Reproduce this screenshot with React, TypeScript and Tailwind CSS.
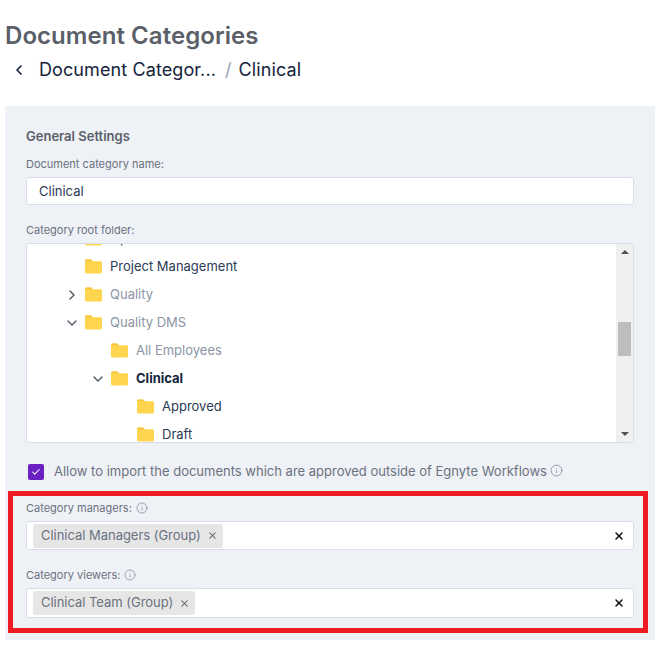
import React from 'react';
import { ChevronLeft, ChevronRight, ChevronDown, Check, X, Info } from 'lucide-react';

type Folder = {
  name: string;
  depth: number;
  open?: boolean;
  closed?: boolean;
  muted?: boolean;
  active?: boolean;
};

const folders: Folder[] = [
  { name: 'Operations', depth: 0 },
  { name: 'Project Management', depth: 0 },
  { name: 'Quality', depth: 0, closed: true, muted: true },
  { name: 'Quality DMS', depth: 0, open: true, muted: true },
  { name: 'All Employees', depth: 1, muted: true },
  { name: 'Clinical', depth: 1, open: true, active: true },
  { name: 'Approved', depth: 2 },
  { name: 'Draft', depth: 2 },
];

const FolderIcon = () => (
  <svg width="17" height="15" viewBox="0 0 17 15" className="-mt-[2px] shrink-0">
    <path
      d="M1.5 0.5h4.2c.5 0 .8.2 1.1.5l1 1.2h7.7c.8 0 1.5.7 1.5 1.5v9.3c0 .8-.7 1.5-1.5 1.5H1.5C.7 14.500 0 13.800 0 13V2C0 1.200.7.500 1.500.500z"
      fill="#ffd54f"
    />
    <path d="M0 2c0-.8.7-1.500 1.500-1.500h4.200c.5 0 .8.2 1.100.5l1 1.200H0z" fill="#f5c33b" />
  </svg>
);

const TreeRow = ({ folder }: { folder: Folder }) => {
  const indent = folder.depth === 0 ? 'pl-[37px]' : folder.depth === 1 ? 'pl-[63px]' : 'pl-[89px]';
  const color = folder.active
    ? 'text-[#14233c] font-bold'
    : folder.muted
      ? 'text-[#8c95a5]'
      : 'text-[#2b3a55]';
  return (
    <div className={`flex h-7 items-center ${indent}`}>
      <span className="flex w-[21px] shrink-0 items-center">
        {folder.open && <ChevronDown size={16} strokeWidth={2} className="text-[#4b5563]" />}
        {folder.closed && <ChevronRight size={16} strokeWidth={2} className="text-[#4b5563]" />}
      </span>
      <FolderIcon />
      <span className={`ml-2 text-[13px] ${color}`}>{folder.name}</span>
    </div>
  );
};

const TagField = ({ label, tag, height }: { label: string; tag: string; height: string }) => (
  <div>
    <div className="flex h-4 items-center gap-[4px] text-[11px] text-[#6b7280]">
      {label}
      <Info size={12} strokeWidth={1.5} className="text-[#858c98]" />
    </div>
    <div className={`mt-[5px] flex items-center justify-between rounded-[3px] border border-[#d8dee9] bg-white pl-[6px] pr-[8px] ${height}`}>
      <span className="flex h-6 items-center gap-[6px] rounded-[3px] bg-[#e6e6e6] pl-2 pr-[5px] text-[13px] tracking-[-0.03px] text-[#6a7280]">
        {tag}
        <X size={11} strokeWidth={2.25} className="text-[#555b66]" />
      </span>
      <X size={12} strokeWidth={3} className="text-[#111111]" />
    </div>
  </div>
);

export default function App() {
  return (
    <div className="relative h-[646px] w-[661px] overflow-hidden bg-white font-['Inter',sans-serif]">
      <div className="pl-[5px] pt-[21px]">
        <h1 className="text-[24px] font-semibold leading-[29px] tracking-[0.05px] text-[#5a5f69]">Document Categories</h1>
        <div className="mt-[7px] flex h-[25px] items-center text-[18px] tracking-[0.1px] text-[#14233c]">
          <ChevronLeft size={16} strokeWidth={2.5} className="ml-[6px] mr-[12px]" />
          <span>Document Categor...</span>
          <span className="ml-[9px] mr-[7px] text-[#9aa3b0]">/</span>
          <span>Clinical</span>
        </div>
      </div>

      <div className="ml-[5px] mt-[24px] h-[534px] w-[650px] bg-[#eef1f6] px-[21px] pt-[22px]">
        <h2 className="text-[13px] font-semibold leading-4 text-[#5a5f69]">General Settings</h2>
        <label className="mt-[12px] block text-[11px] leading-4 text-[#6b7280]">Document category name:</label>
        <div className="mt-[5px] flex h-7 items-center rounded-[3px] border border-[#d8dee9] bg-white px-3 pt-[2px] text-[13px] text-[#2b3a55]">
          Clinical
        </div>

        <label className="mt-[17px] block text-[11px] leading-4 text-[#6b7280]">Category root folder:</label>
        <div className="mt-[5px] flex h-[200px] overflow-hidden rounded-[3px] border border-[#d8dee9] bg-white">
          <div className="min-w-0 flex-1 overflow-hidden">
            <div className="-mt-[19px]">
              {folders.map((f) => (
                <TreeRow key={f.name} folder={f} />
              ))}
            </div>
          </div>
          <div className="flex w-[17px] shrink-0 flex-col items-center justify-between bg-[#f0f0f0] py-[6px]">
            <span className="h-0 w-0 border-x-[4px] border-b-[4px] border-x-transparent border-b-[#505050]" />
            <span className="mb-[64px] mt-[56px] h-[34px] w-[13px] bg-[#bdbdbd]" />
            <span className="h-0 w-0 border-x-[4px] border-t-[4px] border-x-transparent border-t-[#505050]" />
          </div>
        </div>

        <div className="ml-[2px] mt-[20px] flex h-[17px] items-center text-[13px] text-[#6b7280]">
          <span className="mr-[10px] flex h-4 w-4 items-center justify-center rounded-[2px] bg-[#6a1fc2]">
            <Check size={10} strokeWidth={2.5} className="text-white" />
          </span>
          Allow to import the documents which are approved outside of Egnyte Workflows
          <Info size={13} strokeWidth={1.5} className="ml-[3px] -translate-y-[1px] text-[#858c98]" />
        </div>

        <div className="mt-[20px] flex flex-col gap-[17px]">
          <TagField label="Category managers:" tag="Clinical Managers (Group)" height="h-[29px]" />
          <TagField label="Category viewers:" tag="Clinical Team (Group)" height="h-[30px]" />
        </div>
      </div>

      {/* red annotation box drawn over the form */}
      <div className="pointer-events-none absolute left-[8px] top-[491px] h-[142px] w-[640px] border-[5px] border-[#ed1c24]" />
    </div>
  );
}
